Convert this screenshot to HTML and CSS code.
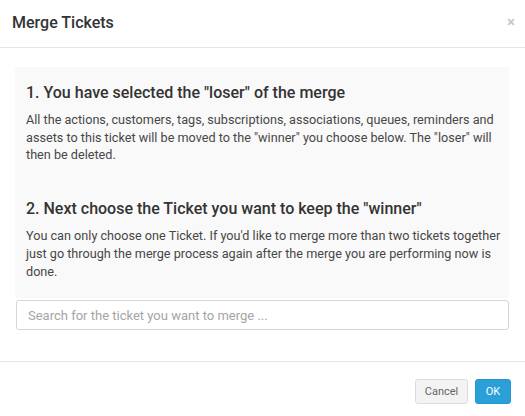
FILE: index.html
```html
<!DOCTYPE html>
<html>
<head>
<meta charset="utf-8">
<link rel="stylesheet" href="styles.css">
</head>
<body>
<div class="modal">
  <div class="modal-header">
    <h4 class="modal-title">Merge Tickets</h4>
    <span class="close">×</span>
  </div>
  <div class="modal-body">
    <div class="panel">
      <div class="section">
        <h3 class="step">1. You have selected the "loser" of the merge</h3>
        <p class="desc">All the actions, customers, tags, subscriptions, associations, queues, reminders and assets to this ticket will be moved to the "winner" you choose below. The "loser" will then be deleted.</p>
      </div>
      <div class="section second">
        <h3 class="step">2. Next choose the Ticket you want to keep the "winner"</h3>
        <p class="desc">You can only choose one Ticket. If you'd like to merge more than two tickets together just go through the merge process again after the merge you are performing now is done.</p>
      </div>
    </div>
    <input class="search" type="text" placeholder="Search for the ticket you want to merge ...">
  </div>
  <div class="modal-footer">
    <button class="btn btn-cancel">Cancel</button>
    <button class="btn btn-ok">OK</button>
  </div>
</div>
</body>
</html>
```
FILE: styles.css
```css
html, body {
  margin: 0;
  padding: 0;
  background: #ffffff;
}
body {
  font-family: Roboto, "Liberation Sans", sans-serif;
  color: #333;
  width: 525px;
  height: 416px;
  overflow: hidden;
}
.modal {
  display: flex;
  flex-direction: column;
}
.modal-header {
  display: flex;
  align-items: flex-start;
  justify-content: space-between;
  padding: 13px 10px 14px 12px;
  border-bottom: 1px solid #e5e5e5;
}
.modal-title {
  margin: 0;
  font-size: 16px;
  line-height: 20px;
  font-weight: 500;
  color: #333;
}
.close {
  font-size: 15px;
  line-height: 15px;
  font-weight: 700;
  color: #c9c9c9;
  margin-top: 2px;
}
.modal-body {
  padding: 19px 16px 31px 15px;
  display: flex;
  flex-direction: column;
}
.panel {
  background: #f9f9f9;
  padding: 16px 0 18px 11px;
}
.step {
  margin: 0;
  font-size: 16px;
  line-height: 20px;
  font-weight: 500;
  color: #333;
}
.desc {
  margin: 8px 0 0 0;
  font-size: 12.65px;
  line-height: 17.7px;
  color: #474747;
}
.second {
  margin-top: 35px;
}
.search {
  margin: 2px 0 0 1px;
  height: 30px;
  box-sizing: border-box;
  border: 1px solid #d6d6d6;
  border-radius: 3px;
  padding: 0 11px;
  font-family: Roboto, "Liberation Sans", sans-serif;
  font-size: 13px;
  color: #555;
  background: #fff;
  outline: none;
}
.search::placeholder {
  color: #a5a5a5;
}
.modal-footer {
  border-top: 1px solid #e5e5e5;
  padding: 17px 14px 0 0;
  display: flex;
  justify-content: flex-end;
  gap: 7px;
}
.btn {
  height: 25px;
  border-radius: 3px;
  font-family: Roboto, "Liberation Sans", sans-serif;
  font-size: 11px;
  padding: 0;
  cursor: pointer;
}
.btn-cancel {
  width: 53px;
  background: #f3f3f3;
  border: 1px solid #dcdcdc;
  color: #666;
}
.btn-ok {
  width: 36px;
  background: #2b9fd8;
  border: 1px solid #2596cf;
  color: #fff;
}
```
